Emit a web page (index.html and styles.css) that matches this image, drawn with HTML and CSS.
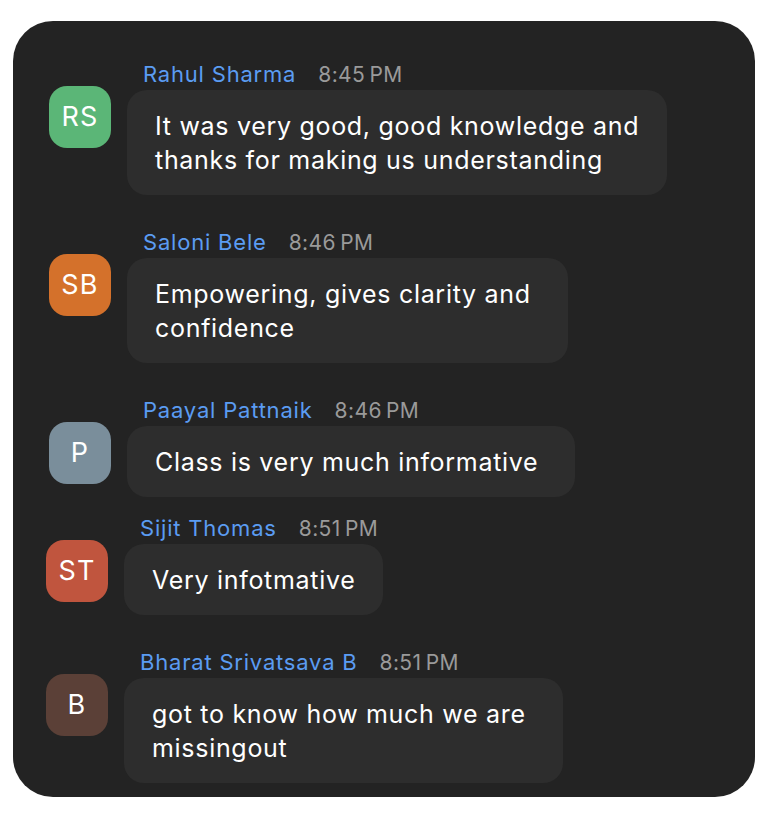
FILE: index.html
```html
<!DOCTYPE html>
<html lang="en">
<head>
  <meta charset="UTF-8" />
  <meta name="viewport" content="width=device-width, initial-scale=1.0"/>
  <title>Chat</title>
  <link rel="stylesheet" href="styles.css">
</head>
<body>
  <div class="chat">

    <div class="message">
      <div class="header">
        <span class="name">Rahul Sharma</span>
        <span class="time">8:45&#8239;PM</span>
      </div>
      <div class="row">
        <div class="avatar green">RS</div>
        <div class="bubble">It was very good, good knowledge and<br>thanks for making us understanding</div>
      </div>
    </div>

    <div class="message">
      <div class="header">
        <span class="name">Saloni Bele</span>
        <span class="time">8:46&#8239;PM</span>
      </div>
      <div class="row">
        <div class="avatar orange">SB</div>
        <div class="bubble wide">Empowering, gives clarity and<br>confidence</div>
      </div>
    </div>

    <div class="message tight">
      <div class="header">
        <span class="name">Paayal Pattnaik</span>
        <span class="time">8:46&#8239;PM</span>
      </div>
      <div class="row">
        <div class="avatar slate">P</div>
        <div class="bubble wide">Class is very much informative</div>
      </div>
    </div>

    <div class="message shifted">
      <div class="header">
        <span class="name">Sijit Thomas</span>
        <span class="time">8:51&#8239;PM</span>
      </div>
      <div class="row">
        <div class="avatar red">ST</div>
        <div class="bubble">Very infotmative</div>
      </div>
    </div>

    <div class="message shifted">
      <div class="header">
        <span class="name">Bharat Srivatsava B</span>
        <span class="time">8:51&#8239;PM</span>
      </div>
      <div class="row">
        <div class="avatar brown">B</div>
        <div class="bubble wide">got to know how much we are<br>missingout</div>
      </div>
    </div>

  </div>
</body>
</html>
```

FILE: styles.css
```css
body {
  margin: 0;
  background-color: #fff;
  font-family: 'Inter', 'Helvetica Neue', sans-serif;
}

/* Dark chat panel */
.chat {
  box-sizing: border-box;
  width: 742px;
  height: 776px;
  margin: 21px 0 0 13px;
  padding: 40px 0 0 36px;
  background-color: #232323;
  border-radius: 40px;
  overflow: hidden;
}

.message {
  margin-bottom: 34px;
}

.message.tight {
  margin-bottom: 18px;
}

.message.shifted {
  margin-left: -3px;
}

/* name + time line */
.header {
  display: flex;
  align-items: baseline;
  gap: 22px;
  padding-left: 94px;
  height: 26px;
  line-height: 26px;
  margin-bottom: 3px;
}

.name {
  font-size: 22px;
  letter-spacing: 0.8px;
  color: #5b9cf2;
}

.time {
  font-size: 21px;
  letter-spacing: 0.4px;
  color: #9a9a9a;
}

.row {
  display: flex;
  align-items: flex-start;
  gap: 16px;
}

.avatar {
  flex: none;
  width: 62px;
  height: 62px;
  margin-top: -4px;
  border-radius: 18px;
  color: #fff;
  font-size: 27px;
  line-height: 62px;
  text-align: center;
  letter-spacing: 1.2px;
}

.green { background-color: #5bb677; }
.orange { background-color: #d4712b; }
.slate { background-color: #7a8e9b; }
.red { background-color: #c0553e; }
.brown { background-color: #5b4037; }

.bubble {
  padding: 19px 28px 18px;
  background-color: #2d2d2d;
  border-radius: 20px;
  color: #fff;
  font-size: 25px;
  letter-spacing: 0.7px;
  line-height: 34px;
}

.bubble.wide {
  padding-right: 37px;
}
```
